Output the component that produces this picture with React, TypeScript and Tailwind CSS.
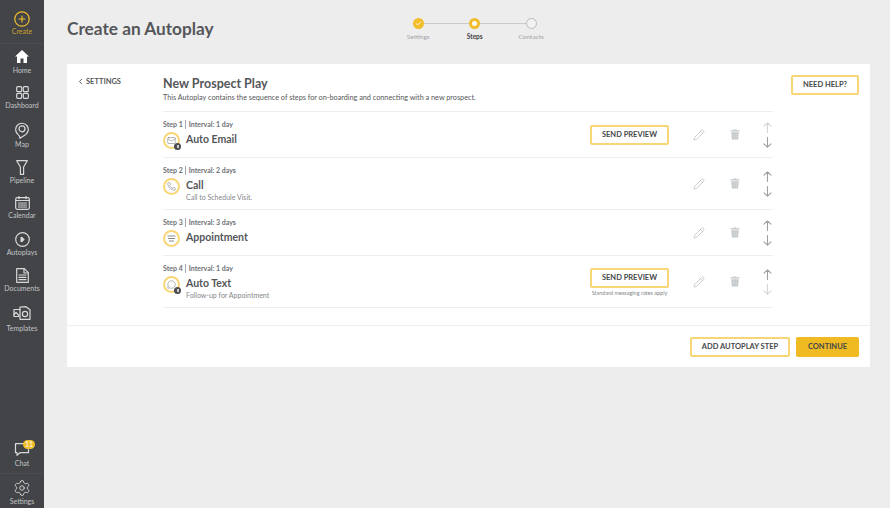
import React from "react";
import { Check, ChevronLeft, Pencil, Phone, Mail, MessageCircle, Settings as Gear } from "lucide-react";

const Y = "#f2bd2b";
const C = "#d8d9da";

function NavIcon({ name }: { name: string }) {
  const s = { fill: "none", stroke: C, strokeWidth: 1.2, strokeLinejoin: "round" as const, strokeLinecap: "round" as const };
  switch (name) {
    case "Create":
      return <svg className="block" width="16" height="16" viewBox="0 0 16 16"><circle cx="8" cy="8" r="7.200" fill="none" stroke={Y} strokeWidth="1.200" /><path d="M8 5v6M5 8h6" stroke={Y} strokeWidth="1.200" strokeLinecap="round" /></svg>;
    case "Home":
      return <svg className="block" width="14" height="13" viewBox="0 0 14 13"><path d="M7 0 0 6.500h2V13h3.500V8.500h3V13H12V6.500h2z" fill="#fff" /></svg>;
    case "Dashboard":
      return <svg className="block" width="13" height="13" viewBox="0 0 13 13" {...s}><rect x="0.700" y="0.700" width="5" height="5" rx="1" /><rect x="7.300" y="0.700" width="5" height="5" rx="1" /><rect x="0.700" y="7.300" width="5" height="5" rx="1" /><rect x="7.300" y="7.300" width="5" height="5" rx="1" /></svg>;
    case "Map":
      return <svg className="block" width="14" height="17" viewBox="0 0 14 17" {...s}><path d="M5 16.300c0-1.300-.4-2.600-1.800-3.700A6.300 6.300 0 1 1 10.500 12.800C8.500 13.800 6.800 15 5 16.300z" /><circle cx="7" cy="6.800" r="3" /></svg>;
    case "Pipeline":
      return <svg className="block" width="12" height="15" viewBox="0 0 12 15" {...s}><path d="M.7 .7h10.600L7.600 7v7.300H4.400V7z" /></svg>;
    case "Calendar":
      return <svg className="block" width="15" height="14" viewBox="0 0 15 14" {...s}><rect x="0.700" y="1.700" width="13.600" height="11.600" rx="1.500" /><path d="M4 .5v2.200M11 .5v2.200M.7 4.500h13.600" /><path d="M3.500 7h8M3.500 9h8M3.500 11h8" strokeDasharray="1.600 1" /></svg>;
    case "Autoplays":
      return <svg className="block" width="15" height="15" viewBox="0 0 15 15"><circle cx="7.500" cy="7.500" r="6.800" fill="none" stroke={C} strokeWidth="1.200" /><path d="M5.500 5h1.800l2.400 2.500-2.400 2.500H5.500z" fill={C} /></svg>;
    case "Documents":
      return <svg className="block" width="13" height="15" viewBox="0 0 13 15" {...s}><path d="M.7.7h7.600l4 4v9.600H.7z" /><path d="M8 .7v4.300h4.300M3 7h7M3 9.300h7M3 11.600h7" /></svg>;
    case "Templates":
      return <svg className="block" width="18" height="14" viewBox="0 0 18 14" {...s}><path d="M7 3.500H1v7h5" /><path d="M7 1 13 .7l4 3V13.300H7z" /><circle cx="12" cy="8" r="2.600" /><path d="M1 8.500l2-2 3 3" /></svg>;
    case "Chat":
      return <svg className="block" width="16" height="13" viewBox="0 0 16 13" {...s}><path d="M1.500.7h13v9H6l-3 2.600V9.700H1.500z" /></svg>;
    default:
      return <Gear size={18} color={C} strokeWidth={1.2} className="block -my-[1px]" />;
  }
}

function NavItem({ name, cls, yellow, badge }: { name: string; cls: string; yellow?: boolean; badge?: boolean }) {
  return (
    <div className={`${cls} relative flex flex-col items-center`}>
      <NavIcon name={name} />
      {badge && <span className="absolute left-[23px] top-[-3px] flex h-[9px] w-[12px] items-center justify-center rounded-full bg-[#f2bd2b] text-[7px] leading-[9px] text-white">11</span>}
      <span className={`text-[7px] leading-[9px] ${yellow ? "text-[#c9a02c]" : "text-[#c3c4c6]"}`}>{name}</span>
    </div>
  );
}

function Stage({ label, state }: { label: string; state: "done" | "active" | "todo" }) {
  return (
    <div className="relative z-10 flex w-[56.500px] flex-col items-center gap-[4px]">
      {state === "done" && <span className="flex h-[11px] w-[11px] items-center justify-center rounded-full bg-[#f2bd2b]"><Check size={7} color="#fff" strokeWidth={3} /></span>}
      {state === "active" && <span className="h-[11px] w-[11px] rounded-full border-[3px] border-[#f2bd2b] bg-white" />}
      {state === "todo" && <span className="h-[11px] w-[11px] rounded-full border border-[#b9bbbc] bg-[#f2f2f2]" />}
      <span className={`text-[6.500px] leading-[7px] ${state === "active" ? "font-bold text-[#3f4144]" : "text-[#a3a5a7]"}`}>{label}</span>
    </div>
  );
}

function StepIcon({ children, badge }: { children: React.ReactNode; badge?: boolean }) {
  return (
    <span className="relative flex h-[17px] w-[17px] shrink-0 items-center justify-center rounded-full border-2 border-[#f9d675] text-[#6a6c70]">
      {children}
      {badge && (
        <span className="absolute bottom-[-3px] right-[-3px] flex h-[7px] w-[7px] items-center justify-center rounded-full bg-[#4a4c50]">
          <span className="h-[3px] w-[2px] bg-[#d0d0d0]" />
        </span>
      )}
    </span>
  );
}

function Lines() {
  return <svg className="block" width="9" height="7" viewBox="0 0 9 7" fill="none" stroke="#6a6c70" strokeWidth="0.800"><path d="M.5 1h8M1 3.500h7M2 6h5" /></svg>;
}

function Arrow({ up, dim }: { up?: boolean; dim?: boolean }) {
  return (
    <svg className="block" width="9" height="11" viewBox="0 0 9 11" fill="none" stroke={dim ? "#d3d6d8" : "#9ba0a3"} strokeWidth="1.100" strokeLinecap="round" strokeLinejoin="round">
      {up ? <path d="M4.500 10.500V.8M1 4.200 4.500.8 8 4.200" /> : <path d="M4.500.5v9.700M1 6.800l3.500 3.400L8 6.800" />}
    </svg>
  );
}

function Trash() {
  return (
    <svg className="block" width="10" height="11" viewBox="0 0 10 11">
      <path d="M3.500.5h3v.8H9.500v1.200H.5V1.300h3z" fill="#c4c8ca" />
      <path d="M1.300 3.200h7.400l-.6 7.300H1.900z" fill="#c4c8ca" />
      <path d="M3.500 4.500v4.800M5 4.500v4.800M6.500 4.500v4.800" stroke="#dfe2e3" strokeWidth="0.500" />
    </svg>
  );
}

const outline = "flex items-center justify-center rounded-[2px] border-2 border-[#f9d675] text-[7.500px] font-bold text-[#45474a]";

type Step = { n: number; interval: string; title: string; sub?: string; icon: React.ReactNode; badge?: boolean; preview?: boolean; note?: boolean; h: string; upDim?: boolean; downDim?: boolean };

const steps: Step[] = [
  { n: 1, interval: "1 day", title: "Auto Email", icon: <Mail size={9} strokeWidth={1.3} />, badge: true, preview: true, h: "h-[46px]", upDim: true },
  { n: 2, interval: "2 days", title: "Call", sub: "Call to Schedule Visit.", icon: <Phone size={9} strokeWidth={1.3} />, h: "h-[52px]" },
  { n: 3, interval: "3 days", title: "Appointment", icon: <Lines />, h: "h-[46px]" },
  { n: 4, interval: "1 day", title: "Auto Text", sub: "Follow-up for Appointment", icon: <MessageCircle size={9} strokeWidth={1.3} />, badge: true, preview: true, note: true, h: "h-[52px]", downDim: true },
];

function Row({ s }: { s: Step }) {
  return (
    <div className={`${s.h} flex items-center border-b border-[#eceef2]`}>
      <div className="flex h-full min-w-0 flex-1 flex-col pt-[8px]">
        <div className="flex h-[8px] items-center text-[7px] font-bold leading-[8px] text-[#6f7175]">
          <span>Step {s.n}</span>
          <span className="mx-[2.500px] h-[9px] w-px bg-[#a5a7aa]" />
          <span>Interval: {s.interval}</span>
        </div>
        <div className="mt-[4px] flex items-start gap-[6px]">
          <StepIcon badge={s.badge}>{s.icon}</StepIcon>
          <div className="flex flex-col pt-[1px]">
            <span className="text-[10.500px] font-bold leading-[13px] text-[#55575a]">{s.title}</span>
            {s.sub && <span className="mt-[1px] text-[7px] leading-[8px] text-[#85878a]">{s.sub}</span>}
          </div>
        </div>
      </div>
      <div className={`relative mr-[24px] ${s.note ? "mb-[7px]" : ""}`}>
        {s.preview && <span className={`${outline} h-[20px] w-[79px]`}>SEND PREVIEW</span>}
        {s.note && <span className="absolute left-0 top-[22px] w-[79px] text-center text-[5.500px] leading-[6px] whitespace-nowrap text-[#85878a]">Standard messaging rates apply</span>}
      </div>
      <Pencil size={12} color="#b0b4b6" strokeWidth={1.300} className="mr-[25px]" />
      <span className="mr-[21px]"><Trash /></span>
      <div className="flex w-[12px] flex-col items-center gap-[4px]">
        <Arrow up dim={s.upDim} />
        <Arrow dim={s.downDim} />
      </div>
    </div>
  );
}

export default function App() {
  return (
    <div className="flex h-[508px] w-[890px] overflow-hidden bg-[#ededed] font-['Lato','Noto_Sans',sans-serif]">
      <aside className="flex w-[44px] shrink-0 flex-col bg-[#424448]">
        <div className="h-[44px] border-b border-[#4a4c50] pt-[11px]"><NavItem name="Create" cls="" yellow /></div>
        <NavItem name="Home" cls="mt-[6px] gap-[3px]" />
        <NavItem name="Dashboard" cls="mt-[11px] gap-[2px]" />
        <NavItem name="Map" cls="mt-[12px] gap-[1px]" />
        <NavItem name="Pipeline" cls="mt-[11px] gap-[1px]" />
        <NavItem name="Calendar" cls="mt-[11px] gap-[1px]" />
        <NavItem name="Autoplays" cls="mt-[12px] gap-[1px]" />
        <NavItem name="Documents" cls="mt-[11px] gap-[1px]" />
        <NavItem name="Templates" cls="mt-[13px] gap-[4px]" />
        <div className="mt-auto h-[31px] border-b border-[#4a4c50]"><NavItem name="Chat" cls="gap-[3px]" badge /></div>
        <div className="h-[34px] pt-[6px]"><NavItem name="Settings" cls="gap-[1px]" /></div>
      </aside>
      <main className="min-w-0 flex-1 pl-[23px] pr-[20px]">
        <header className="relative flex h-[64px] items-center pb-[6px]">
          <h1 className="text-[17.250px] font-bold text-[#55575a]">Create an Autoplay</h1>
          <div className="absolute left-[323px] top-[18px] flex">
            <span className="absolute left-[28px] right-[28px] top-[5px] h-px bg-[#c8cacb]" />
            <Stage label="Settings" state="done" />
            <Stage label="Steps" state="active" />
            <Stage label="Contacts" state="todo" />
          </div>
        </header>
        <section className="h-[303px] bg-white">
          <div className="flex h-[262px] border-b border-[#eceef0]">
            <div className="w-[96px] pl-[9px] pt-[12px]">
              <div className="flex items-center gap-[1px] text-[7.500px] font-bold text-[#55575a]"><ChevronLeft size={9} strokeWidth={2.500} />SETTINGS</div>
            </div>
            <div className="w-[610px] pt-[12px]">
              <h2 className="text-[12.500px] font-bold leading-[15px] text-[#55575a]">New Prospect Play</h2>
              <p className="mt-[2px] text-[7.250px] leading-[9px] text-[#55575a]">This Autoplay contains the sequence of steps for on-boarding and connecting with a new prospect.</p>
              <div className="mt-[9px] border-t border-[#eceef2]">
                {steps.map((s) => <Row key={s.n} s={s} />)}
              </div>
            </div>
            <div className="flex flex-1 justify-end pr-[11px] pt-[11px]">
              <span className={`${outline} h-[20px] w-[68px]`}>NEED HELP?</span>
            </div>
          </div>
          <div className="flex justify-end gap-[6px] pr-[11px] pt-[11px]">
            <span className={`${outline} h-[20px] w-[100px]`}>ADD AUTOPLAY STEP</span>
            <span className="flex h-[20px] w-[63px] items-center justify-center rounded-[2px] bg-[#f0bb22] text-[7.500px] font-bold text-[#45474a]">CONTINUE</span>
          </div>
        </section>
      </main>
    </div>
  );
}
